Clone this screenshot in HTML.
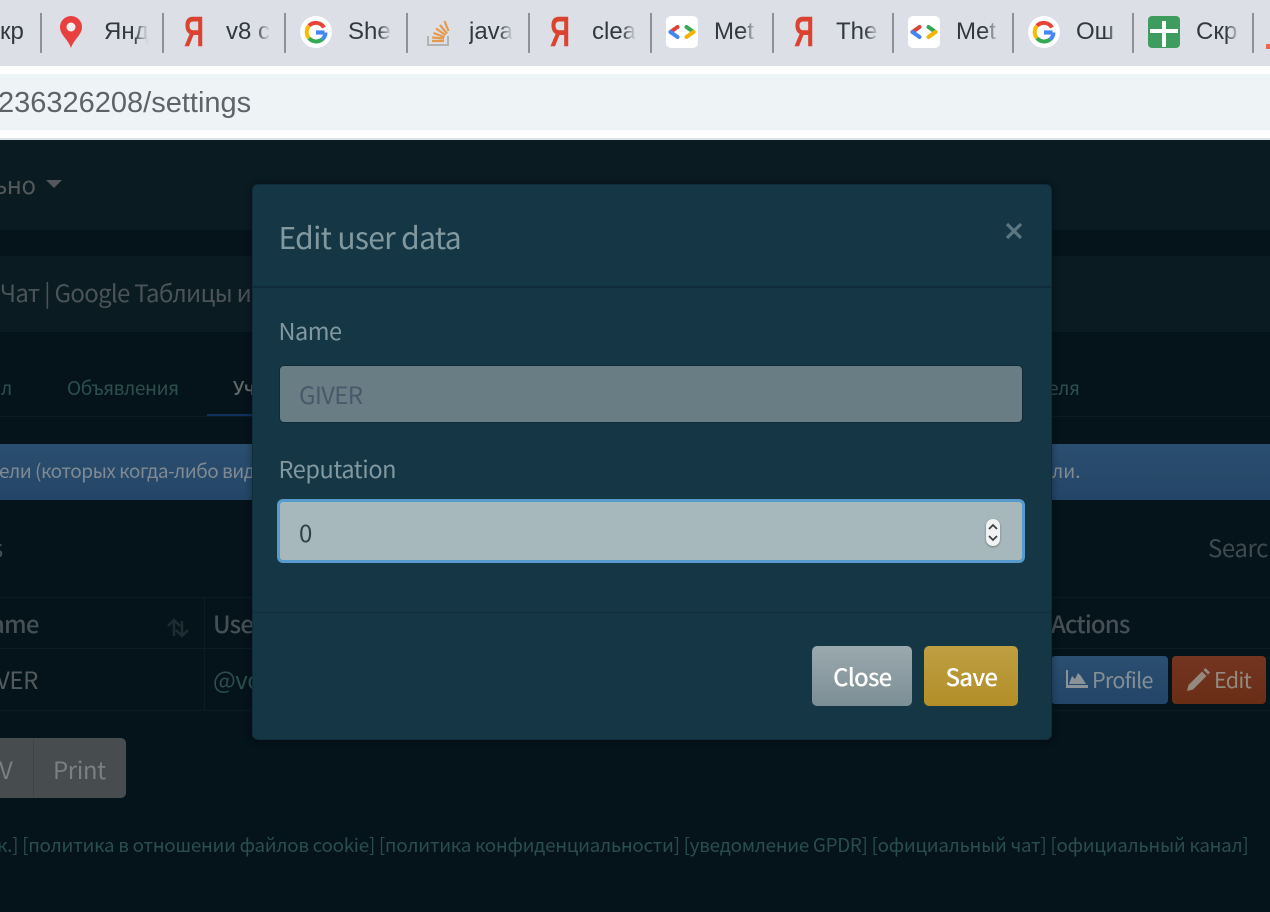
<!DOCTYPE html>
<html lang="en"><head><meta charset="utf-8"><title>Edit user data</title>
<style>
html,body{margin:0;padding:0;width:1270px;height:912px;overflow:hidden;background:#04141a}
body{position:relative;font-family:"Noto Sans CJK SC","Liberation Sans",sans-serif}
.a{position:absolute}
.t{position:absolute;white-space:nowrap;line-height:1}
.b{position:absolute;white-space:nowrap;line-height:1.1;font-family:"Liberation Sans",sans-serif;font-size:24px;color:#33383f;top:19px;overflow:hidden}
.s{position:absolute;top:13px;width:2px;height:40px;background:#8d9199}
.fade{position:absolute;top:14px;width:14px;height:36px;background:linear-gradient(90deg,rgba(220,223,230,0),#dcdfe6)}
.y{position:absolute;top:7px;font:bold 43px/50px 'Liberation Sans',sans-serif;color:#d9432f;transform:scaleX(.65);transform-origin:0 0;white-space:nowrap}
svg{position:absolute;display:block}
</style></head><body>
<!-- browser bookmarks -->
<div class="a" style="left:0;top:0;width:1270px;height:66px;background:#dcdfe6"></div>
<div class="a" style="left:0;top:66px;width:1270px;height:8px;background:#fff"></div>
<div class="a" style="left:0;top:74px;width:1270px;height:56px;background:#eef3f5"></div>
<div class="a" style="left:0;top:130px;width:1270px;height:8px;background:#fff"></div>
<div class="a" style="left:0;top:138px;width:1270px;height:2px;background:#dbe3e6"></div>
<div class="t" style="left:-2px;top:87px;font:29px/32px 'Liberation Sans',sans-serif;color:#5d6368">236326208/settings</div>

<div class="b" style="left:0;width:24px">кр</div>
<div class="s" style="left:40px"></div>
<svg style="left:58px;top:15px" width="26" height="34" viewBox="0 0 26 34"><path d="M13 33C10 24 2 20 2 12a11 11 0 0 1 22 0c0 8-8 12-11 21z" fill="#e8403f"/><circle cx="13" cy="12" r="4.5" fill="#f3f1ef"/></svg>
<div class="b" style="left:104px;width:44px">Янд</div>
<div class="s" style="left:162px"></div>
<div class="y" style="left:184px">Я</div>
<div class="b" style="left:226px;width:44px">v8 c</div>
<div class="s" style="left:284px"></div>
<svg style="left:300px;top:16px" width="32" height="32" viewBox="0 0 32 32"><circle cx="16" cy="16" r="16" fill="#fff"/><path d="M24.5 16.5H16" stroke="#4285f4" stroke-width="4.2" fill="none"/><path d="M24 11.500A9.500 9.500 0 0 0 9 9.800" stroke="#ea4335" stroke-width="4" fill="none"/><path d="M9 9.800a9.500 9.500 0 0 0 0 12.400" stroke="#fbbc05" stroke-width="4" fill="none"/><path d="M9 22.200a9.500 9.500 0 0 0 13 1.300" stroke="#34a853" stroke-width="4" fill="none"/><path d="M22 23.500a9 9 0 0 0 3.500-7" stroke="#4285f4" stroke-width="4" fill="none"/></svg>
<div class="b" style="left:348px;width:44px">She</div>
<div class="s" style="left:406px"></div>
<svg style="left:424px;top:18px" width="30" height="30" viewBox="0 0 30 30"><path d="M4 18v9h20v-9" fill="none" stroke="#b5b3ae" stroke-width="2"/><path d="M8 23h12M8 19.500l12 1M9.500 15l11 4M12 10.500l9.500 6.500M16 7l7 8.500M20.500 3l4 10" stroke="#e59a4e" stroke-width="2.200" fill="none"/></svg>
<div class="b" style="left:469px;width:44px">java</div>
<div class="s" style="left:528px"></div>
<div class="y" style="left:550px">Я</div>
<div class="b" style="left:592px;width:44px">clea</div>
<div class="s" style="left:650px"></div>
<svg style="left:666px;top:16px" width="32" height="32" viewBox="0 0 32 32"><rect width="32" height="32" rx="5" fill="#fff"/><path d="M11.500 11L4.500 16" stroke="#db4437" stroke-width="4" stroke-linecap="round"/><path d="M4.500 16l7 5" stroke="#4285f4" stroke-width="4" stroke-linecap="round"/><path d="M20.500 11l7 5" stroke="#34a853" stroke-width="4" stroke-linecap="round"/><path d="M27.500 16l-7 5" stroke="#f4b400" stroke-width="4" stroke-linecap="round"/></svg>
<div class="b" style="left:714px;width:44px">Met</div>
<div class="s" style="left:772px"></div>
<div class="y" style="left:794px">Я</div>
<div class="b" style="left:836px;width:44px">The</div>
<div class="s" style="left:892px"></div>
<svg style="left:908px;top:16px" width="32" height="32" viewBox="0 0 32 32"><rect width="32" height="32" rx="5" fill="#fff"/><path d="M11.500 11L4.500 16" stroke="#db4437" stroke-width="4" stroke-linecap="round"/><path d="M4.500 16l7 5" stroke="#4285f4" stroke-width="4" stroke-linecap="round"/><path d="M20.500 11l7 5" stroke="#34a853" stroke-width="4" stroke-linecap="round"/><path d="M27.500 16l-7 5" stroke="#f4b400" stroke-width="4" stroke-linecap="round"/></svg>
<div class="b" style="left:956px;width:44px">Met</div>
<div class="s" style="left:1012px"></div>
<svg style="left:1028px;top:16px" width="32" height="32" viewBox="0 0 32 32"><circle cx="16" cy="16" r="16" fill="#fff"/><path d="M24.500 16.500H16" stroke="#4285f4" stroke-width="4.200" fill="none"/><path d="M24 11.500A9.500 9.500 0 0 0 9 9.800" stroke="#ea4335" stroke-width="4" fill="none"/><path d="M9 9.800a9.500 9.500 0 0 0 0 12.400" stroke="#fbbc05" stroke-width="4" fill="none"/><path d="M9 22.200a9.500 9.500 0 0 0 13 1.300" stroke="#34a853" stroke-width="4" fill="none"/><path d="M22 23.500a9 9 0 0 0 3.500-7" stroke="#4285f4" stroke-width="4" fill="none"/></svg>
<div class="b" style="left:1076px;width:44px">Ош</div>
<div class="s" style="left:1132px"></div>
<svg style="left:1148px;top:16px" width="32" height="32" viewBox="0 0 32 32"><rect width="32" height="32" rx="4" fill="#3f9c5f"/><path d="M2 13h28v4H2zM14 5h4v26h-4z" fill="#fff"/></svg>
<div class="b" style="left:1196px;width:44px">Скр</div>
<div class="s" style="left:1252px"></div>
<div class="a" style="left:1266px;top:44px;width:4px;height:5px;background:#e26b4c"></div>
<div class="fade" style="left:44px"></div><div class="fade" style="left:134px"></div><div class="fade" style="left:256px"></div><div class="fade" style="left:378px"></div><div class="fade" style="left:499px"></div><div class="fade" style="left:622px"></div><div class="fade" style="left:743px"></div><div class="fade" style="left:865px"></div><div class="fade" style="left:985px"></div><div class="fade" style="left:1107px"></div><div class="fade" style="left:1226px"></div>

<!-- dim page -->
<div class="a" style="left:0;top:140px;width:1270px;height:772px;background:#04141a"></div>
<div class="a" style="left:0;top:140px;width:1270px;height:90px;background:#0a1b22"></div>
<div class="a" style="left:0;top:256px;width:1270px;height:76px;background:#0a1b21"></div>
<div class="t" style="left:-6px;top:172px;font-size:24px;color:#54585b;letter-spacing:-.4px">ьно</div>
<div class="a" style="left:46px;top:180px;width:0;height:0;border-left:8px solid transparent;border-right:8px solid transparent;border-top:8px solid #54585b"></div>
<div class="t" style="left:0;top:280px;font-size:24px;color:#4a5358;letter-spacing:-.7px">Чат | Google Таблицы и</div>
<div class="a" style="left:0;top:416px;width:1270px;height:1px;background:#0a1b21"></div>
<div class="t" style="left:1px;top:378px;font-size:19px;color:#2c4f4e">л</div>
<div class="t" style="left:67px;top:378px;font-size:19px;color:#2c4f4e;letter-spacing:-.4px">Объявления</div>
<div class="t" style="left:233px;top:378px;font-size:19px;color:#63686a;font-weight:500">Уч</div>
<div class="a" style="left:207px;top:414px;width:50px;height:2px;background:#10305f"></div>
<div class="t" style="left:1048px;top:378px;font-size:19px;color:#2c4f4e;letter-spacing:-.4px">еля</div>
<div class="a" style="left:0;top:444px;width:1270px;height:56px;background:linear-gradient(#2b4f70,#244567)"></div>
<div class="t" style="left:-1px;top:461px;font-size:19px;color:#808a92;letter-spacing:-.5px">ели (которых когда-либо вид</div>
<div class="t" style="left:1052px;top:461px;font-size:19px;color:#808a92">ли.</div>
<div class="t" style="left:-8px;top:535px;font-size:24px;color:#454f55">s</div>
<div class="t" style="left:1208px;top:535px;font-size:24px;color:#3f4a50;letter-spacing:-.4px">Search</div>
<div class="a" style="left:0;top:597px;width:1270px;height:1px;background:#0b1c22"></div>
<div class="a" style="left:0;top:648px;width:1270px;height:1px;background:#0b1c22"></div>
<div class="a" style="left:0;top:710px;width:1270px;height:1px;background:#0b1c22"></div>
<div class="a" style="left:204px;top:597px;width:1px;height:114px;background:#0b1c22"></div>
<div class="t" style="left:-9px;top:611px;font-size:24px;color:#454f55;font-weight:500;letter-spacing:-.8px">ame</div>
<svg style="left:166px;top:618px" width="24" height="20" viewBox="0 0 24 20"><path d="M2 8l6-6 6 6M8 2v16M10 12l6 6 6-6M16 18V3" fill="none" stroke="#1f2c31" stroke-width="2.500"/></svg>
<div class="t" style="left:213px;top:611px;font-size:24px;color:#454f55;font-weight:500;letter-spacing:-.8px">Use</div>
<div class="t" style="left:-4px;top:667px;font-size:24px;color:#535a5e;letter-spacing:-.4px">VER</div>
<div class="t" style="left:213px;top:667px;font-size:24px;color:#2c4f4e;letter-spacing:-.4px">@vo</div>
<div class="t" style="left:1051px;top:611px;font-size:24px;color:#454f55;font-weight:500;letter-spacing:-.9px">Actions</div>
<div class="a" style="left:1051px;top:656px;width:117px;height:48px;border-radius:4px;background:linear-gradient(#2b4f70,#234567)"></div>
<svg style="left:1065px;top:670px" width="23" height="19" viewBox="0 0 23 19"><path d="M1 0h2v15h20v3H1z" fill="#8b9298"/><path d="M4 14l3-8 3 3 3-6 3 3 5 8z" fill="#8b9298"/></svg>
<div class="t" style="left:1092px;top:669px;font-size:21.500px;color:#848e96;letter-spacing:-.7px">Profile</div>
<div class="a" style="left:1172px;top:656px;width:94px;height:48px;border-radius:4px;background:linear-gradient(#743520,#692d16)"></div>
<svg style="left:1187px;top:668px" width="23" height="23" viewBox="0 0 23 23"><path d="M0 23l1.500-6L15 3.500l4.500 4.500L6 21.500zM16.500 2l2-2 4.500 4.500-2 2z" fill="#93897f"/></svg>
<div class="t" style="left:1214px;top:669px;font-size:21.500px;color:#93897f;letter-spacing:-.7px">Edit</div>
<div class="a" style="left:-40px;top:738px;width:166px;height:60px;border-radius:5px;background:#474c4e"></div>
<div class="a" style="left:33px;top:739px;width:1px;height:58px;background:#3e4345"></div>
<div class="t" style="left:-1px;top:757px;font-size:24px;color:#7b7f80">V</div>
<div class="t" style="left:53px;top:757px;font-size:24px;color:#7b7f80;letter-spacing:-.4px">Print</div>
<div class="t" style="left:-3px;top:836px;font-size:18.800px;color:#2a4d4e;letter-spacing:-.27px">к.] [политика в отношении файлов cookie] [политика конфиденциальности] [уведомление GPDR] [официальный чат] [официальный канал]</div>

<!-- modal -->
<div class="a" style="left:252px;top:184px;width:800px;height:556px;box-sizing:border-box;border:1px solid #112c3a;border-radius:6px;background:#153644;box-shadow:0 0 8px rgba(0,0,0,.4)"></div>
<div class="a" style="left:253px;top:286px;width:798px;height:2px;background:#0f2b3c"></div>
<div class="a" style="left:253px;top:612px;width:798px;height:1px;background:#0f2b3c"></div>
<div class="t" style="left:278.500px;top:221px;font-size:30px;color:#82989f;letter-spacing:-.68px">Edit user data</div>
<svg style="left:1005px;top:222px" width="18" height="18" viewBox="0 0 18 18"><path d="M2 2l14 14M16 2L2 16" stroke="#5c7680" stroke-width="3.200"/></svg>
<div class="t" style="left:278.500px;top:319px;font-size:23.500px;color:#82989f;letter-spacing:-.5px">Name</div>
<div class="a" style="left:279px;top:365px;width:744px;height:58px;box-sizing:border-box;border:1px solid #122a38;border-radius:5px;background:#697d84"></div>
<div class="t" style="left:299px;top:382px;font-size:24px;color:#49596a;letter-spacing:-.7px">GIVER</div>
<div class="t" style="left:278.500px;top:457px;font-size:23.500px;color:#82989f;letter-spacing:-.4px">Reputation</div>
<div class="a" style="left:277px;top:499px;width:748px;height:64px;box-sizing:border-box;border:3px solid #569bcc;border-radius:6px;background:#a6b8bb"></div>
<div class="t" style="left:299px;top:520px;font-size:24px;color:#2f3f49">0</div>
<div class="a" style="left:986px;top:519px;width:14px;height:27px;border-radius:7px;background:#f1f3f3;box-shadow:0 1px 2px rgba(0,0,0,.35)"></div>
<svg style="left:986px;top:519px" width="14" height="27" viewBox="0 0 14 27"><path d="M3 10l4-4 4 4M3 17l4 4 4-4" fill="none" stroke="#3a4448" stroke-width="1.800"/></svg>
<div class="a" style="left:812px;top:646px;width:100px;height:60px;border-radius:5px;background:linear-gradient(#9aa9ae,#7c8e95)"></div>
<div class="t" style="left:833px;top:664px;font-size:24px;color:#fff;font-weight:500;letter-spacing:-.8px">Close</div>
<div class="a" style="left:924px;top:646px;width:94px;height:60px;border-radius:5px;background:linear-gradient(#bd9f42,#b38e28)"></div>
<div class="t" style="left:945.500px;top:664px;font-size:24px;color:#fff;font-weight:500;letter-spacing:-.8px">Save</div>
</body></html>
